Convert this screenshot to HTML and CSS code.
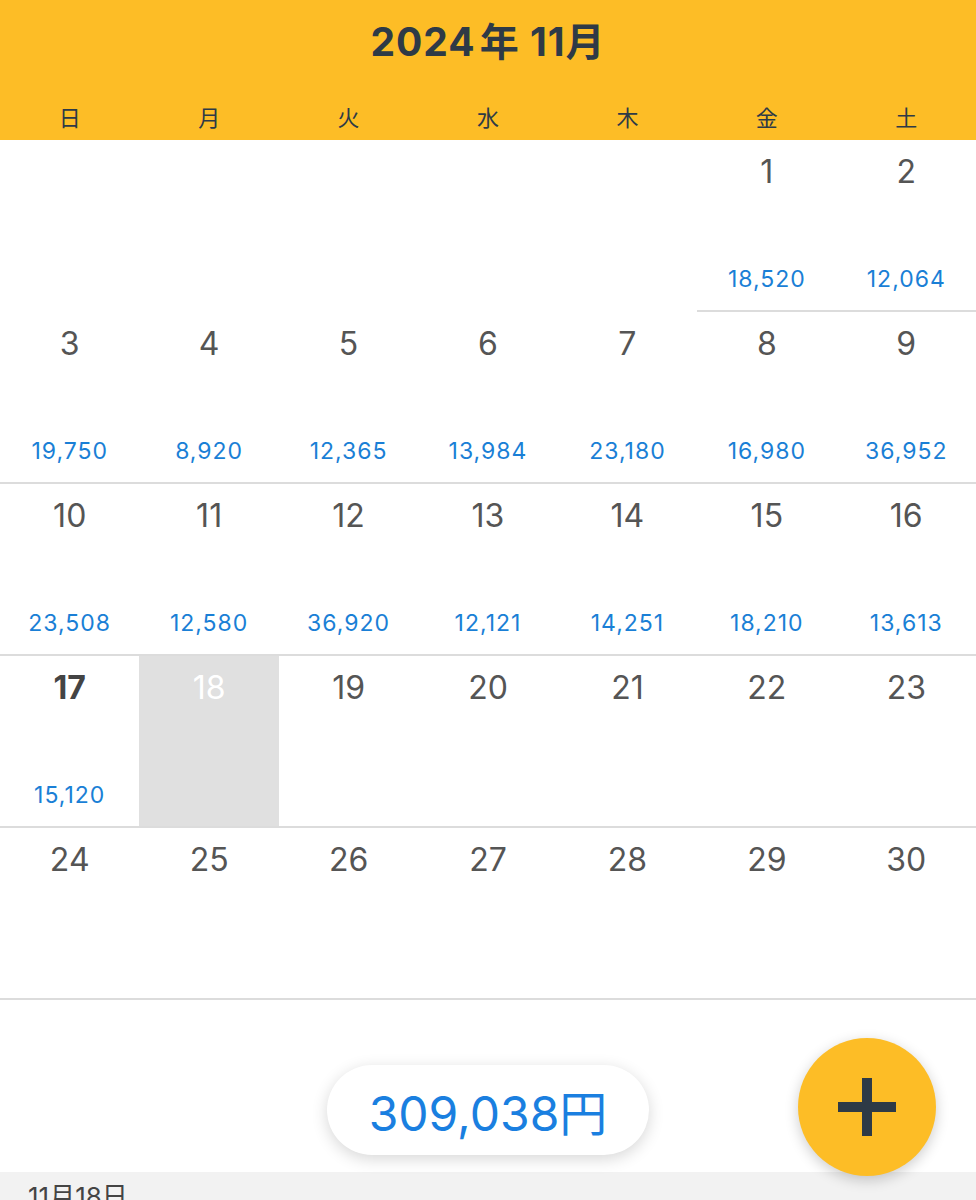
FILE: index.html
```html
<!DOCTYPE html>
<html>
<head>
    <title>カレンダー</title>
    <link rel="stylesheet" href="styles.css">
</head>
<body>
    <div class="header">
        <h1 class="title">2024<span class="kanji">年</span> 11月</h1>
        <div class="weekdays">
            <span>日</span><span>月</span><span>火</span><span>水</span><span>木</span><span>金</span><span>土</span>
        </div>
    </div>

    <div class="grid">
        <div class="cell empty"></div>
        <div class="cell empty"></div>
        <div class="cell empty"></div>
        <div class="cell empty"></div>
        <div class="cell empty"></div>
        <div class="cell"><span class="day">1</span><span class="amount">18,520</span></div>
        <div class="cell"><span class="day">2</span><span class="amount">12,064</span></div>

        <div class="cell"><span class="day">3</span><span class="amount">19,750</span></div>
        <div class="cell"><span class="day">4</span><span class="amount">8,920</span></div>
        <div class="cell"><span class="day">5</span><span class="amount">12,365</span></div>
        <div class="cell"><span class="day">6</span><span class="amount">13,984</span></div>
        <div class="cell"><span class="day">7</span><span class="amount">23,180</span></div>
        <div class="cell"><span class="day">8</span><span class="amount">16,980</span></div>
        <div class="cell"><span class="day">9</span><span class="amount">36,952</span></div>

        <div class="cell"><span class="day">10</span><span class="amount">23,508</span></div>
        <div class="cell"><span class="day">11</span><span class="amount">12,580</span></div>
        <div class="cell"><span class="day">12</span><span class="amount">36,920</span></div>
        <div class="cell"><span class="day">13</span><span class="amount">12,121</span></div>
        <div class="cell"><span class="day">14</span><span class="amount">14,251</span></div>
        <div class="cell"><span class="day">15</span><span class="amount">18,210</span></div>
        <div class="cell"><span class="day">16</span><span class="amount">13,613</span></div>

        <div class="cell today"><span class="day">17</span><span class="amount">15,120</span></div>
        <div class="cell selected"><span class="day">18</span></div>
        <div class="cell"><span class="day">19</span></div>
        <div class="cell"><span class="day">20</span></div>
        <div class="cell"><span class="day">21</span></div>
        <div class="cell"><span class="day">22</span></div>
        <div class="cell"><span class="day">23</span></div>

        <div class="cell"><span class="day">24</span></div>
        <div class="cell"><span class="day">25</span></div>
        <div class="cell"><span class="day">26</span></div>
        <div class="cell"><span class="day">27</span></div>
        <div class="cell"><span class="day">28</span></div>
        <div class="cell"><span class="day">29</span></div>
        <div class="cell"><span class="day">30</span></div>
    </div>

    <div class="footer">
        <div class="total">309,038円</div>
        <button class="fab" type="button">
            <svg width="60" height="60" viewBox="0 0 60 60">
                <rect x="25" y="1" width="10" height="58" fill="#2e3a46"/>
                <rect x="1" y="25" width="58" height="10" fill="#2e3a46"/>
            </svg>
        </button>
    </div>

    <div class="list-head">11月18日</div>
</body>
</html>
```

FILE: styles.css
```css
body { margin: 0; font-family: Inter, "Noto Sans CJK JP", sans-serif; background: #fff; height: 1200px; overflow: hidden; }

.header { background: #fdbd26; height: 140px; }
.title { margin: 0; padding-top: 16px; height: 52px; text-align: center; font-size: 39px; font-weight: 700; color: #2e3a46; letter-spacing: 1px; line-height: 52px; }
.kanji { margin-left: 4px; }
.weekdays { display: grid; grid-template-columns: repeat(7, 1fr); margin-top: 34px; }
.weekdays span { text-align: center; font-size: 22px; color: #2e3a46; line-height: 28px; font-family: "Noto Sans CJK JP", sans-serif; }

.grid { display: grid; grid-template-columns: repeat(7, 1fr); }
.cell { border-bottom: 2px solid #dcdcdc; display: flex; flex-direction: column; align-items: center; justify-content: space-between; padding: 12px 0 16px; height: 142px; }
.cell.empty { border-bottom-color: transparent; }
.day { font-size: 32px; color: #555; line-height: 40px; }
.amount { font-size: 23px; color: #1a7fd6; line-height: 30px; letter-spacing: 1px; }
.today .day { font-weight: 700; color: #444; }
.selected { background: #e0e0e0; }
.selected .day { color: #fff; }

.footer { position: relative; height: 172px; display: flex; justify-content: center; align-items: center; }
.total { width: 322px; height: 90px; margin-top: 48px; border-radius: 45px; background: #fff; box-shadow: 0 4px 16px rgba(0, 0, 0, 0.16); display: flex; align-items: center; justify-content: center; font-size: 48px; color: #1a7fe0; }
.fab { position: absolute; right: 40px; top: 38px; width: 138px; height: 138px; border: none; border-radius: 50%; background: #fdbd26; box-shadow: 0 4px 14px rgba(0, 0, 0, 0.2); display: flex; align-items: center; justify-content: center; padding: 0; z-index: 2; }

.list-head { background: #f2f2f2; height: 60px; padding: 10px 28px; font-size: 26px; color: #444; line-height: 30px; }
```
